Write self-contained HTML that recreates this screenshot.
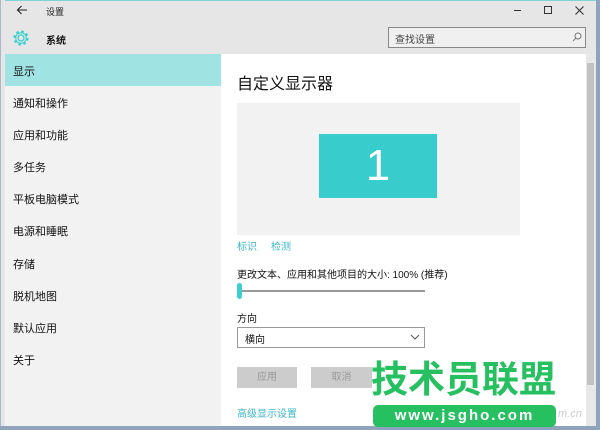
<!DOCTYPE html>
<html><head><meta charset="utf-8"><style>
*{margin:0;padding:0;box-sizing:border-box}
body{width:600px;height:430px;overflow:hidden;background:#8fa4bb;font-family:"Liberation Sans","Noto Sans CJK SC",sans-serif;position:relative}
.a{position:absolute}
.win{left:0;top:0;width:596px;height:426px;background:#e6e6e6;border-top:1px solid #7fd3d3}
.side{left:5px;top:54px;width:216px;height:372px;background:#f2f2f2}
.it{position:absolute;left:8px;font-size:11px;color:#111}
.content{left:221px;top:54px;width:365px;height:372px;background:#fff}
.sb{left:586px;top:54px;width:9px;height:372px;background:#e8e8e8}
</style></head><body>
<div class="a win"></div>
<div class="a" style="left:0;top:0;width:5px;height:426px;background:#e6e6e6;border-left:1px solid #aab8c8"></div>
<svg class="a" style="left:16px;top:5px" width="12" height="10"><path d="M11 5H1.5M5.5 1L1.5 5L5.5 9" fill="none" stroke="#222" stroke-width="1.1"/></svg>
<div class="a" style="left:46px;top:5px;font-size:9px;color:#222">设置</div>
<div class="a" style="left:514px;top:10px;width:7px;height:1px;background:#333"></div>
<div class="a" style="left:544px;top:6px;width:8px;height:8px;border:1px solid #333"></div>
<svg class="a" style="left:575px;top:6px" width="9" height="9"><path d="M0.5 0.5L8.5 8.5M8.5 0.5L0.5 8.5" stroke="#333" stroke-width="1.1"/></svg>
<svg class="a" style="left:12px;top:29px" width="18" height="18" viewBox="0 0 18 18"><circle cx="9" cy="9" r="3" fill="none" stroke="#3ccfcf" stroke-width="1.3"/><circle cx="9" cy="9" r="6.5" fill="none" stroke="#3ccfcf" stroke-width="2.2" stroke-dasharray="2.6 2.5"/><circle cx="9" cy="9" r="5.3" fill="none" stroke="#3ccfcf" stroke-width="1"/></svg>
<div class="a" style="left:46px;top:32px;font-size:10px;font-weight:bold;color:#111">系统</div>
<div class="a" style="left:388px;top:27px;width:198px;height:21px;border:1px solid #888;background:#f0f0f0"></div>
<div class="a" style="left:395px;top:31px;font-size:10px;color:#444">查找设置</div>
<svg class="a" style="left:572px;top:32px" width="10" height="10"><circle cx="6" cy="4" r="3" fill="none" stroke="#777"/><path d="M4 6L1 9" stroke="#777"/></svg>
<div class="a side"></div>
<div class="a" style="left:5px;top:54px;width:216px;height:32px;background:#a0e3e3"></div>
<div class="it" style="top:63px;left:13px">显示</div>
<div class="it" style="top:95px;left:13px">通知和操作</div>
<div class="it" style="top:127px;left:13px">应用和功能</div>
<div class="it" style="top:159px;left:13px">多任务</div>
<div class="it" style="top:191px;left:13px">平板电脑模式</div>
<div class="it" style="top:223px;left:13px">电源和睡眠</div>
<div class="it" style="top:256px;left:13px">存储</div>
<div class="it" style="top:288px;left:13px">脱机地图</div>
<div class="it" style="top:320px;left:13px">默认应用</div>
<div class="it" style="top:352px;left:13px">关于</div>
<div class="a content"></div>
<div class="a sb"></div>
<div class="a" style="left:587px;top:63px;width:7px;height:322px;background:#c2c2c2"></div>
<div class="a" style="left:237px;top:70px;font-size:16px;color:#111">自定义显示器</div>
<div class="a" style="left:237px;top:103px;width:283px;height:132px;background:#f2f2f2"></div>
<div class="a" style="left:319px;top:134px;width:118px;height:64px;background:#38cccc;color:#fff;font-size:44px;text-align:center;line-height:64px;font-weight:200">1</div>
<div class="a" style="left:237px;top:238px;font-size:10px;color:#3cb8c8">标识</div>
<div class="a" style="left:271px;top:238px;font-size:10px;color:#3cb8c8">检测</div>
<div class="a" style="left:237px;top:266px;font-size:10px;color:#111">更改文本、应用和其他项目的大小: 100% (推荐)</div>
<div class="a" style="left:237px;top:290px;width:188px;height:2px;background:#999"></div>
<div class="a" style="left:237px;top:283px;width:5px;height:16px;border-radius:3px;background:#3ccfcf"></div>
<div class="a" style="left:237px;top:310px;font-size:10px;color:#111">方向</div>
<div class="a" style="left:237px;top:327px;width:188px;height:21px;border:1px solid #999;background:#fff"></div>
<div class="a" style="left:245px;top:331px;font-size:10px;color:#111">横向</div>
<svg class="a" style="left:410px;top:334px" width="10" height="6"><path d="M1 1 L5 5 L9 1" fill="none" stroke="#555"/></svg>
<div class="a" style="left:237px;top:367px;width:60px;height:21px;background:#ccc;color:#999;font-size:10px;text-align:center;line-height:21px">应用</div>
<div class="a" style="left:311px;top:367px;width:61px;height:21px;background:#ccc;color:#999;font-size:10px;text-align:center;line-height:21px">取消</div>
<div class="a" style="left:237px;top:405px;font-size:10px;color:#3cb8c8">高级显示设置</div>
<div class="a" style="left:371px;top:358px;font-size:37px;font-weight:bold;color:#26c060;letter-spacing:0px;line-height:44px">技术员联盟</div>
<div class="a" style="left:373px;top:405px;width:183px;height:22px;border-radius:5px;background:#26c060;color:#fff;font-size:15px;font-weight:bold;text-align:center;line-height:22px;letter-spacing:2px">www.jsgho.com</div>
<div class="a" style="left:558px;top:408px;font-size:11px;font-style:italic;color:#ccc">m.cn</div>
</body></html>
